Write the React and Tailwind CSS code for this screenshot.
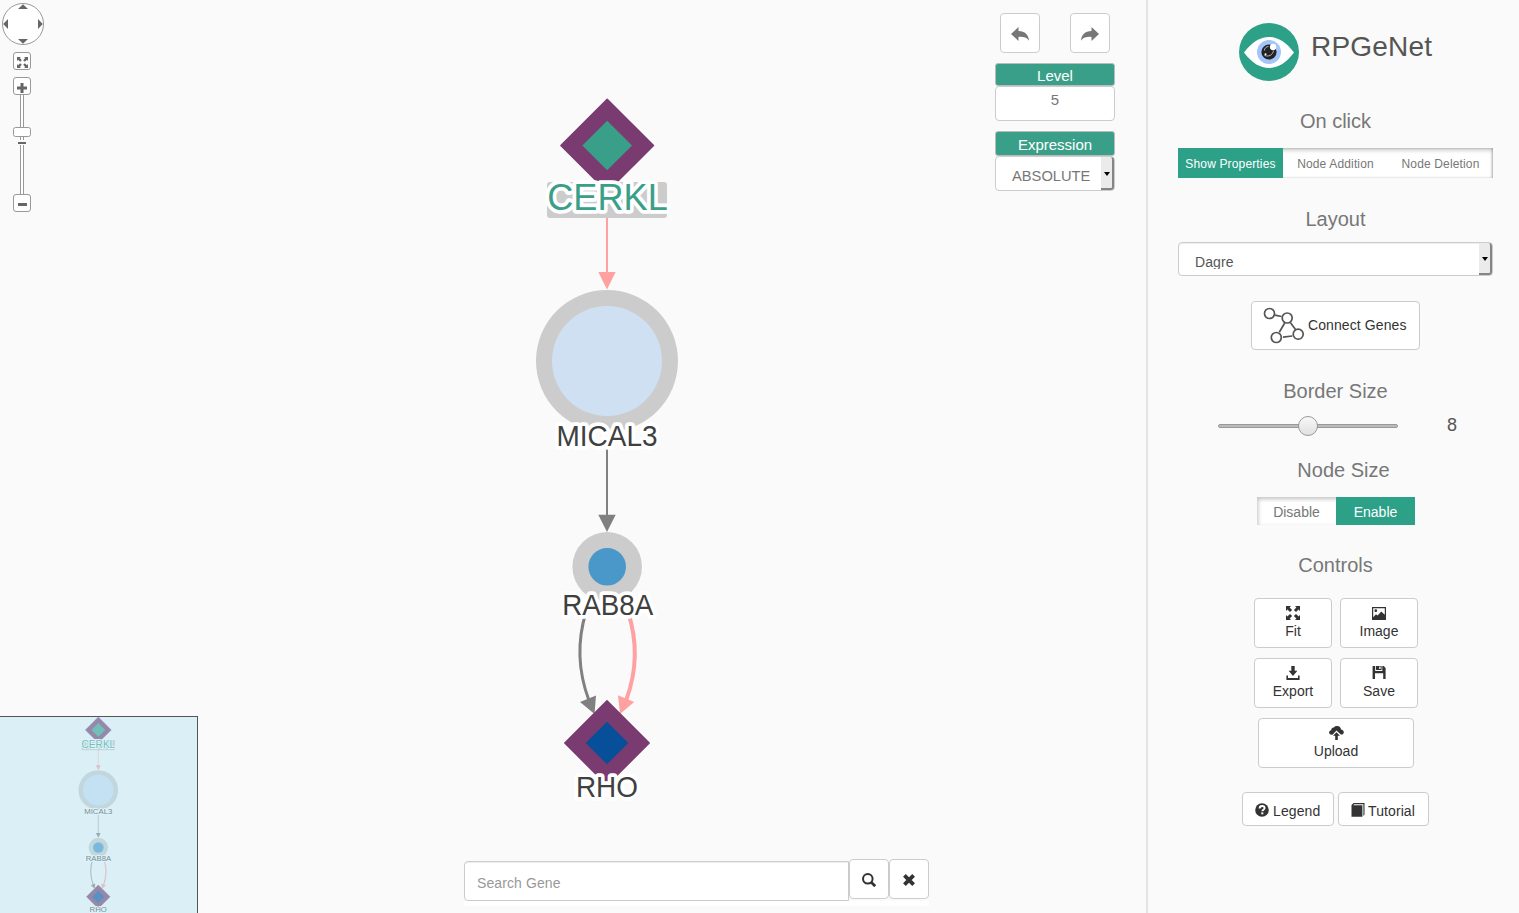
import React from "react";

const purple = "#7a3b70";

function Label({ x, y, size, width, fill = "#404040", children }) {
  const shared = { x, y, textAnchor: "middle", fontSize: size, textLength: width, lengthAdjust: "spacingAndGlyphs" };
  return (
    <>
      <text {...shared} aria-hidden="true" fill="#ffffff" stroke="#ffffff" strokeWidth="7.5" strokeLinejoin="round">
        {children}
      </text>
      <text {...shared} fill={fill}>{children}</text>
    </>
  );
}

function Diamond({ cx, cy, outer, inner, fill }) {
  const pts = (r) => `${cx},${cy - r} ${cx + r},${cy} ${cx},${cy + r} ${cx - r},${cy}`;
  return (
    <>
      <polygon points={pts(outer - 1)} fill={purple} stroke={purple} strokeWidth="1.5" strokeLinejoin="round" />
      <polygon points={pts(inner)} fill={fill} />
    </>
  );
}

function Graph() {
  return (
    <g>
      <path d="M607 200V274" stroke="#ffa1a1" strokeWidth="2" />
      <path d="M598.3 272H615.7L607 289.5Z" fill="#ffa1a1" />
      <path d="M607 440V517" stroke="#808080" strokeWidth="2" />
      <path d="M598.3 514.7H615.7L607 532Z" fill="#808080" />
      <path d="M586 612Q572.5 656 588.8 700" fill="none" stroke="#808080" strokeWidth="3" />
      <path d="M580 702L596 695.5L594.5 714Z" fill="#808080" />
      <path d="M628 612Q642.5 656 626.2 700" fill="none" stroke="#ffa1a1" strokeWidth="4" />
      <path d="M618 695.3L634.2 702L620 714Z" fill="#ffa1a1" />
      <Diamond cx={607.2} cy={145.5} outer={47.3} inner={24.8} fill="#3a9f89" />
      <rect x="547" y="182" width="120" height="36" rx="3" fill="#cccccc" />
      <Label x={607.5} y={209.6} size={37} width={120.5} fill="#3a9f89">CERKL</Label>
      <circle cx="607" cy="361" r="71" fill="#cccccc" />
      <circle cx="607" cy="361" r="55" fill="#cfe0f2" />
      <Label x={607} y={445.6} size={29} width={101}>MICAL3</Label>
      <circle cx="607.2" cy="566.8" r="34.8" fill="#cccccc" />
      <circle cx="607.2" cy="566.8" r="18.8" fill="#4a97c9" />
      <Label x={607.7} y={615.4} size={29} width={91}>RAB8A</Label>
      <Diamond cx={607} cy={743} outer={43.2} inner={21.3} fill="#084f99" />
      <Label x={606.9} y={797.3} size={29} width={62}>RHO</Label>
    </g>
  );
}

function FitIcon({ className }) {
  return (
    <svg viewBox="0 0 14 14" className={className} fill="currentColor">
      {[0, 90, 180, 270].map((a) => (
        <path key={a} transform={`rotate(${a} 7 7)`} d="M0 0H5L3.6 1.4L6.1 4L4 6.1L1.4 3.6L0 5Z" />
      ))}
    </svg>
  );
}

const ShareArrow = ({ flip }) => (
  <svg viewBox="0 0 18 14" width="18" height="14" className={flip ? "-scale-x-100" : ""} fill="#777">
    <path d="M18 7L10.5 0V4C4 4 .3 8 0 13.7C2.3 10.3 6 9.6 10.5 9.9V14Z" />
  </svg>
);

const ImageIcon = () => (
  <svg viewBox="0 0 14 14" width="14" height="14" fill="currentColor">
    <path fillRule="evenodd" d="M0 1H14V14H0ZM1.2 2.2V11.2L4 8.2L5.6 9.6L9.3 5.4L12.8 8.8V2.2ZM3.8 3.3A1.4 1.4 0 1 1 3.8 6.1A1.4 1.4 0 1 1 3.8 3.3Z" />
  </svg>
);
const ExportIcon = () => (
  <svg viewBox="0 0 14 14" width="14" height="14" fill="currentColor">
    <path d="M5.3 0H8.7V4.8H11.4L7 10L2.6 4.8H5.3ZM.4 9.500H2V12H12V9.500H13.6V14H.4Z" />
  </svg>
);
const SaveIcon = () => (
  <svg viewBox="0 0 14 14" width="14" height="14" fill="currentColor">
    <path fillRule="evenodd" d="M.6 0H3.2V5H10.3V0H11.7L13.6 2V13H11.2V7.2H3V13H.6ZM4 0H9.6V4H4ZM7.2 .6V3H8.6V.6Z" />
  </svg>
);
const UploadIcon = () => (
  <svg viewBox="0 0 15 14" width="15" height="14" fill="currentColor">
    <path d="M2.7 8.8C1 8.8 .1 7.8 .1 6.6C.1 5.3 1 4.4 2.2 4.3C2.2 2.4 3.5 1.2 5 1.5C5.8 .4 7 0 8.2 .1C10.4 .2 11.8 1.6 12 3.4C13.7 3.6 14.8 4.7 14.8 6.2C14.8 7.2 14.2 8 13.4 8.400L11.8 8.4L7.5 4.4L3.5 8.8Z" />
    <path d="M7.5 6.300L11 9.8H8.8V14H6.2V9.8H4Z" />
  </svg>
);
const HelpIcon = () => (
  <svg viewBox="0 0 14 14" width="14" height="14">
    <circle cx="7" cy="7" r="6.8" fill="#333" />
    <path d="M4.6 5.5C4.6 3.8 5.5 3 7.1 3C8.7 3 9.6 3.8 9.6 5.1C9.6 6.9 7.4 6.7 7.4 8.3" fill="none" stroke="#fff" strokeWidth="1.9" />
    <rect x="6.3" y="9.4" width="2" height="1.9" fill="#fff" />
  </svg>
);
const BookIcon = () => (
  <svg viewBox="0 0 14 14" width="14" height="14" fill="#333">
    <path d="M.5 2L2.6 0H13.5V11.8L12.4 13V1.2H3.2L2.2 2.2H11.4V13.8H.5Z" />
  </svg>
);
const SearchIcon = () => (
  <svg viewBox="0 0 14 14" width="14" height="14" fill="none" stroke="#333">
    <circle cx="5.800" cy="5.800" r="4.800" strokeWidth="2" />
    <path d="M9.2 9.2L13.2 13.2" strokeWidth="2.8" />
  </svg>
);
const CloseIcon = () => (
  <svg viewBox="0 0 12 12" width="12" height="12" fill="none" stroke="#333" strokeWidth="3.8">
    <path d="M1.4 1.4L10.6 10.6M10.6 1.4L1.4 10.6" />
  </svg>
);

function EyeLogo() {
  return (
    <svg viewBox="0 0 60 58" width="60" height="58">
      <ellipse cx="30" cy="29" rx="30" ry="29" fill="#2da088" />
      <path d="M5 29.5C13 19 21 14 30 14C39 14 47 19 55 29.5C47 40 39 45 30 45C21 45 13 40 5 29.5Z" fill="#fff" />
      <circle cx="30" cy="29" r="12" fill="#a4c5fb" />
      <circle cx="30" cy="29" r="7.6" fill="#232323" />
      <path d="M25.4 27.500C25.600 25 27.600 23.500 29.500 23.500M25.500 32.500C28 33.500 31 33 32.500 31.500C34 30 34.500 28.500 34.300 27.500" fill="none" stroke="#cfd8e8" strokeWidth=".8" />
      <circle cx="34" cy="24" r="3.2" fill="#fff" />
      <circle cx="26.5" cy="31.3" r="1" fill="#fff" />
    </svg>
  );
}

const Heading = ({ children, className = "" }) => (
  <h2 className={`h-6 text-center text-[20px] leading-6 text-[#777] ${className}`}>{children}</h2>
);

const Btn = ({ children, className = "" }) => (
  <button className={`flex shrink-0 items-center rounded-[4px] border border-[#ccc] bg-white text-[14px] leading-5 text-[#333] ${className}`}>
    {children}
  </button>
);

const Tile = ({ icon, children, className = "w-[78px]" }) => (
  <Btn className={`h-[50px] flex-col pt-[7px] ${className}`}>
    <span className="flex h-[15px] items-start">{icon}</span>
    <span className="leading-5">{children}</span>
  </Btn>
);

function SelectArrow() {
  return (
    <span className="flex h-full w-[13px] shrink-0 items-center justify-center rounded-r-[3px] border-r-2 border-b-2 border-[#858585] bg-[#ebebeb] pt-[2px]">
      <span className="h-0 w-0 border-x-[3.5px] border-t-4 border-x-transparent border-t-black" />
    </span>
  );
}

function PanZoom() {
  return (
    <div className="absolute top-[3px] left-[2px] flex w-[42px] flex-col items-center">
      <svg width="42" height="42" viewBox="0 0 42 42">
        <circle cx="21" cy="21" r="20.5" fill="#fff" stroke="#999" />
        <g fill="#666">
          <path d="M16 6H26L21 1.2Z" />
          <path d="M16 36H26L21 40.8Z" />
          <path d="M6 16V26L1.2 21Z" />
          <path d="M36 16V26L40.8 21Z" />
        </g>
      </svg>
      <div className="mt-[7px] mr-[2px] flex h-[18px] w-[18px] items-center justify-center rounded-[3px] border border-[#999] bg-white text-[#666]">
        <FitIcon className="mt-[2px] h-[11px] w-[11px]" />
      </div>
      <svg className="mt-[7px] mr-[2px]" width="18" height="136" viewBox="0 0 18 136">
        <path d="M7.5 16V118M10.5 16V118" stroke="#999" />
        <rect x="8" y="16" width="2" height="102" fill="#fff" />
        <g fill="#fff" stroke="#999">
          <rect x=".5" y=".5" width="17" height="17" rx="2.5" />
          <rect x=".5" y="50.5" width="17" height="9" rx="2" />
          <rect x=".5" y="117.5" width="17" height="17" rx="2.5" />
        </g>
        <rect x="4" y="63" width="10" height="5" fill="#fafafa" />
        <g fill="#666">
          <rect x="5" y="65" width="8" height="2" />
          <rect x="4" y="9.5" width="10" height="3" />
          <rect x="7.5" y="6" width="3" height="10" />
          <rect x="5" y="126" width="9" height="3" />
        </g>
      </svg>
    </div>
  );
}

export default function App() {
  return (
    <div className="flex h-[913px] w-[1519px] overflow-hidden bg-[#fafafa] font-['Liberation_Sans',Arial,sans-serif]">
      <main className="relative h-full w-[1146px] shrink-0 overflow-hidden">
        <svg className="block" width="1146" height="913" viewBox="0 0 1146 913">
          <Graph />
        </svg>

        <PanZoom />

        <div className="absolute bottom-0 left-0 h-[197px] w-[198px] overflow-hidden border-t border-r border-[#555] bg-[#fafafa]">
          <svg width="197" height="196" viewBox="0 717 197 196">
            <g transform="translate(-71.2 689.3) scale(.2792)">
              <Graph />
            </g>
            <rect x="0" y="717" width="197" height="196" fill="#b4e2f1" fillOpacity=".46" />
          </svg>
        </div>

        <div className="absolute top-[13px] left-[995px] flex w-[120px] flex-col">
          <div className="flex justify-between px-[5px]">
            <Btn className="h-10 w-10 justify-center pt-[2px]"><ShareArrow flip /></Btn>
            <Btn className="h-10 w-10 justify-center pt-[2px]"><ShareArrow /></Btn>
          </div>
          <div className="mt-[10px] h-[23px] rounded-[3px] border border-[#bbb] bg-[#3a9f89] text-center text-[15px] leading-[23px] text-white">Level</div>
          <div className="h-[35px] rounded-[4px] border border-[#ccc] bg-white pt-[2px] text-center text-[15px] leading-[22px] text-[#777]">5</div>
          <div className="mt-[10px] h-[25px] rounded-[3px] border border-[#bbb] bg-[#3a9f89] pt-px text-center text-[15px] leading-[23px] text-white">Expression</div>
          <div className="flex h-[35px] rounded-[4px] border border-[#ccc] bg-white">
            <span className="flex-1 pt-[9px] pl-4 text-[14.7px] leading-5 text-[#777]">ABSOLUTE</span>
            <SelectArrow />
          </div>
        </div>

        <div className="absolute top-[859px] left-[464px] flex h-[47px] w-[465px] items-start bg-[linear-gradient(#fafafa_42px,#ffffff_42px)]">
          <div className="mt-[2px] h-10 w-[385px] rounded-l-[4px] border border-[#ccc] bg-white pt-[11px] pl-3 text-[14px] leading-5 tracking-[0.1px] text-[#999] shadow-[inset_0_1px_1px_rgba(0,0,0,0.075)]">Search Gene</div>
          <Btn className="h-10 w-10 justify-center pt-px"><SearchIcon /></Btn>
          <Btn className="h-10 w-10 justify-center pt-px"><CloseIcon /></Btn>
        </div>
      </main>

      <aside className="h-full w-[373px] shrink-0 border-l-2 border-[#e3e3e3] pl-[30px]">
        <div className="flex w-[315px] flex-col">
          <header className="mt-[23px] flex h-[58px] pl-[61px]">
            <EyeLogo />
            <h1 className="ml-[12px] pt-[7px] text-[28px] leading-[34px] tracking-[0.2px] text-[#555]">RPGeNet</h1>
          </header>

          <Heading className="mt-7">On click</Heading>
          <div className="mt-[15px] flex h-[30px] bg-white text-center text-[12px] leading-8 tracking-[0.15px] text-[#777] shadow-[inset_0_2px_4px_rgba(0,0,0,0.25),inset_-1px_0_2px_rgba(0,0,0,0.2)]">
            <span className="w-[105px] bg-[#2da088] text-white">Show Properties</span>
            <span className="w-[105px]">Node Addition</span>
            <span className="w-[105px]">Node Deletion</span>
          </div>

          <Heading className="mt-[29px]">Layout</Heading>
          <div className="mt-[11px] flex h-[34px] rounded-[4px] border border-[#ccc] bg-white text-[14px] text-[#555] shadow-[inset_0_1px_1px_rgba(0,0,0,0.075)]">
            <span className="mt-[9px] h-[17px] flex-1 overflow-hidden pl-4 leading-5 tracking-[0.1px]">Dagre</span>
            <SelectArrow />
          </div>

          <Btn className="mt-[25px] ml-[73px] h-[49px] w-[169px] pl-[11px] tracking-[0.1px]">
            <svg width="43" height="38" viewBox="0 0 43 38" fill="none" stroke="#555" strokeWidth="1.7">
              <circle cx="6.5" cy="6.5" r="5" />
              <circle cx="24.2" cy="11" r="5" />
              <circle cx="13.3" cy="30.5" r="5" />
              <circle cx="35.2" cy="27.2" r="5" />
              <path d="M12 8.2L18.5 9.5M21.7 16L16.3 25.2M27.5 15.7L32.5 22.5M20 30.2L29.3 29" />
            </svg>
            <span className="ml-[2px] pb-[2px] whitespace-nowrap">Connect Genes</span>
          </Btn>

          <Heading className="mt-[29px]">Border Size</Heading>
          <div className="mt-[12px] flex h-[22px] items-center">
            <div className="relative ml-10 h-1 w-[180px] rounded-[2px] border border-[#999] bg-[#bbb]">
              <div className="absolute -top-[9px] left-[79px] h-5 w-5 rounded-full border border-[#999] bg-gradient-to-b from-[#f8f8f8] to-[#e0e0e0]" />
            </div>
            <span className="-mt-[2px] ml-[49px] text-[18px] leading-5 text-[#555]">8</span>
          </div>

          <Heading className="mt-[21px] pl-[16px]">Node Size</Heading>
          <div className="mt-[15px] ml-[79px] flex h-7 w-[158px] bg-white text-center text-[14px] leading-[30px] text-[#777] shadow-[inset_1px_2px_4px_rgba(0,0,0,0.25)]">
            <span className="w-[79px]">Disable</span>
            <span className="w-[79px] bg-[#2da088] text-white">Enable</span>
          </div>

          <Heading className="mt-[28px]">Controls</Heading>
          <div className="mt-[21px] ml-[76px] grid w-[164px] grid-cols-2 gap-x-2 gap-y-[10px]">
            <Tile icon={<FitIcon className="h-[14px] w-[14px]" />}>Fit</Tile>
            <Tile icon={<ImageIcon />}>Image</Tile>
            <Tile icon={<ExportIcon />}>Export</Tile>
            <Tile icon={<SaveIcon />}>Save</Tile>
          </div>
          <Tile icon={<UploadIcon />} className="mt-[10px] ml-[80px] w-[156px]">Upload</Tile>

          <div className="mt-6 ml-16 flex gap-1">
            <Btn className="h-[34px] w-[92px] gap-1 pt-px pl-3 tracking-[0.1px]"><HelpIcon /><span className="pt-[2px]">Legend</span></Btn>
            <Btn className="h-[34px] w-[91px] gap-[3px] pt-px pl-3 tracking-[0.1px]"><BookIcon /><span className="pt-[2px]">Tutorial</span></Btn>
          </div>
        </div>
      </aside>
    </div>
  );
}
